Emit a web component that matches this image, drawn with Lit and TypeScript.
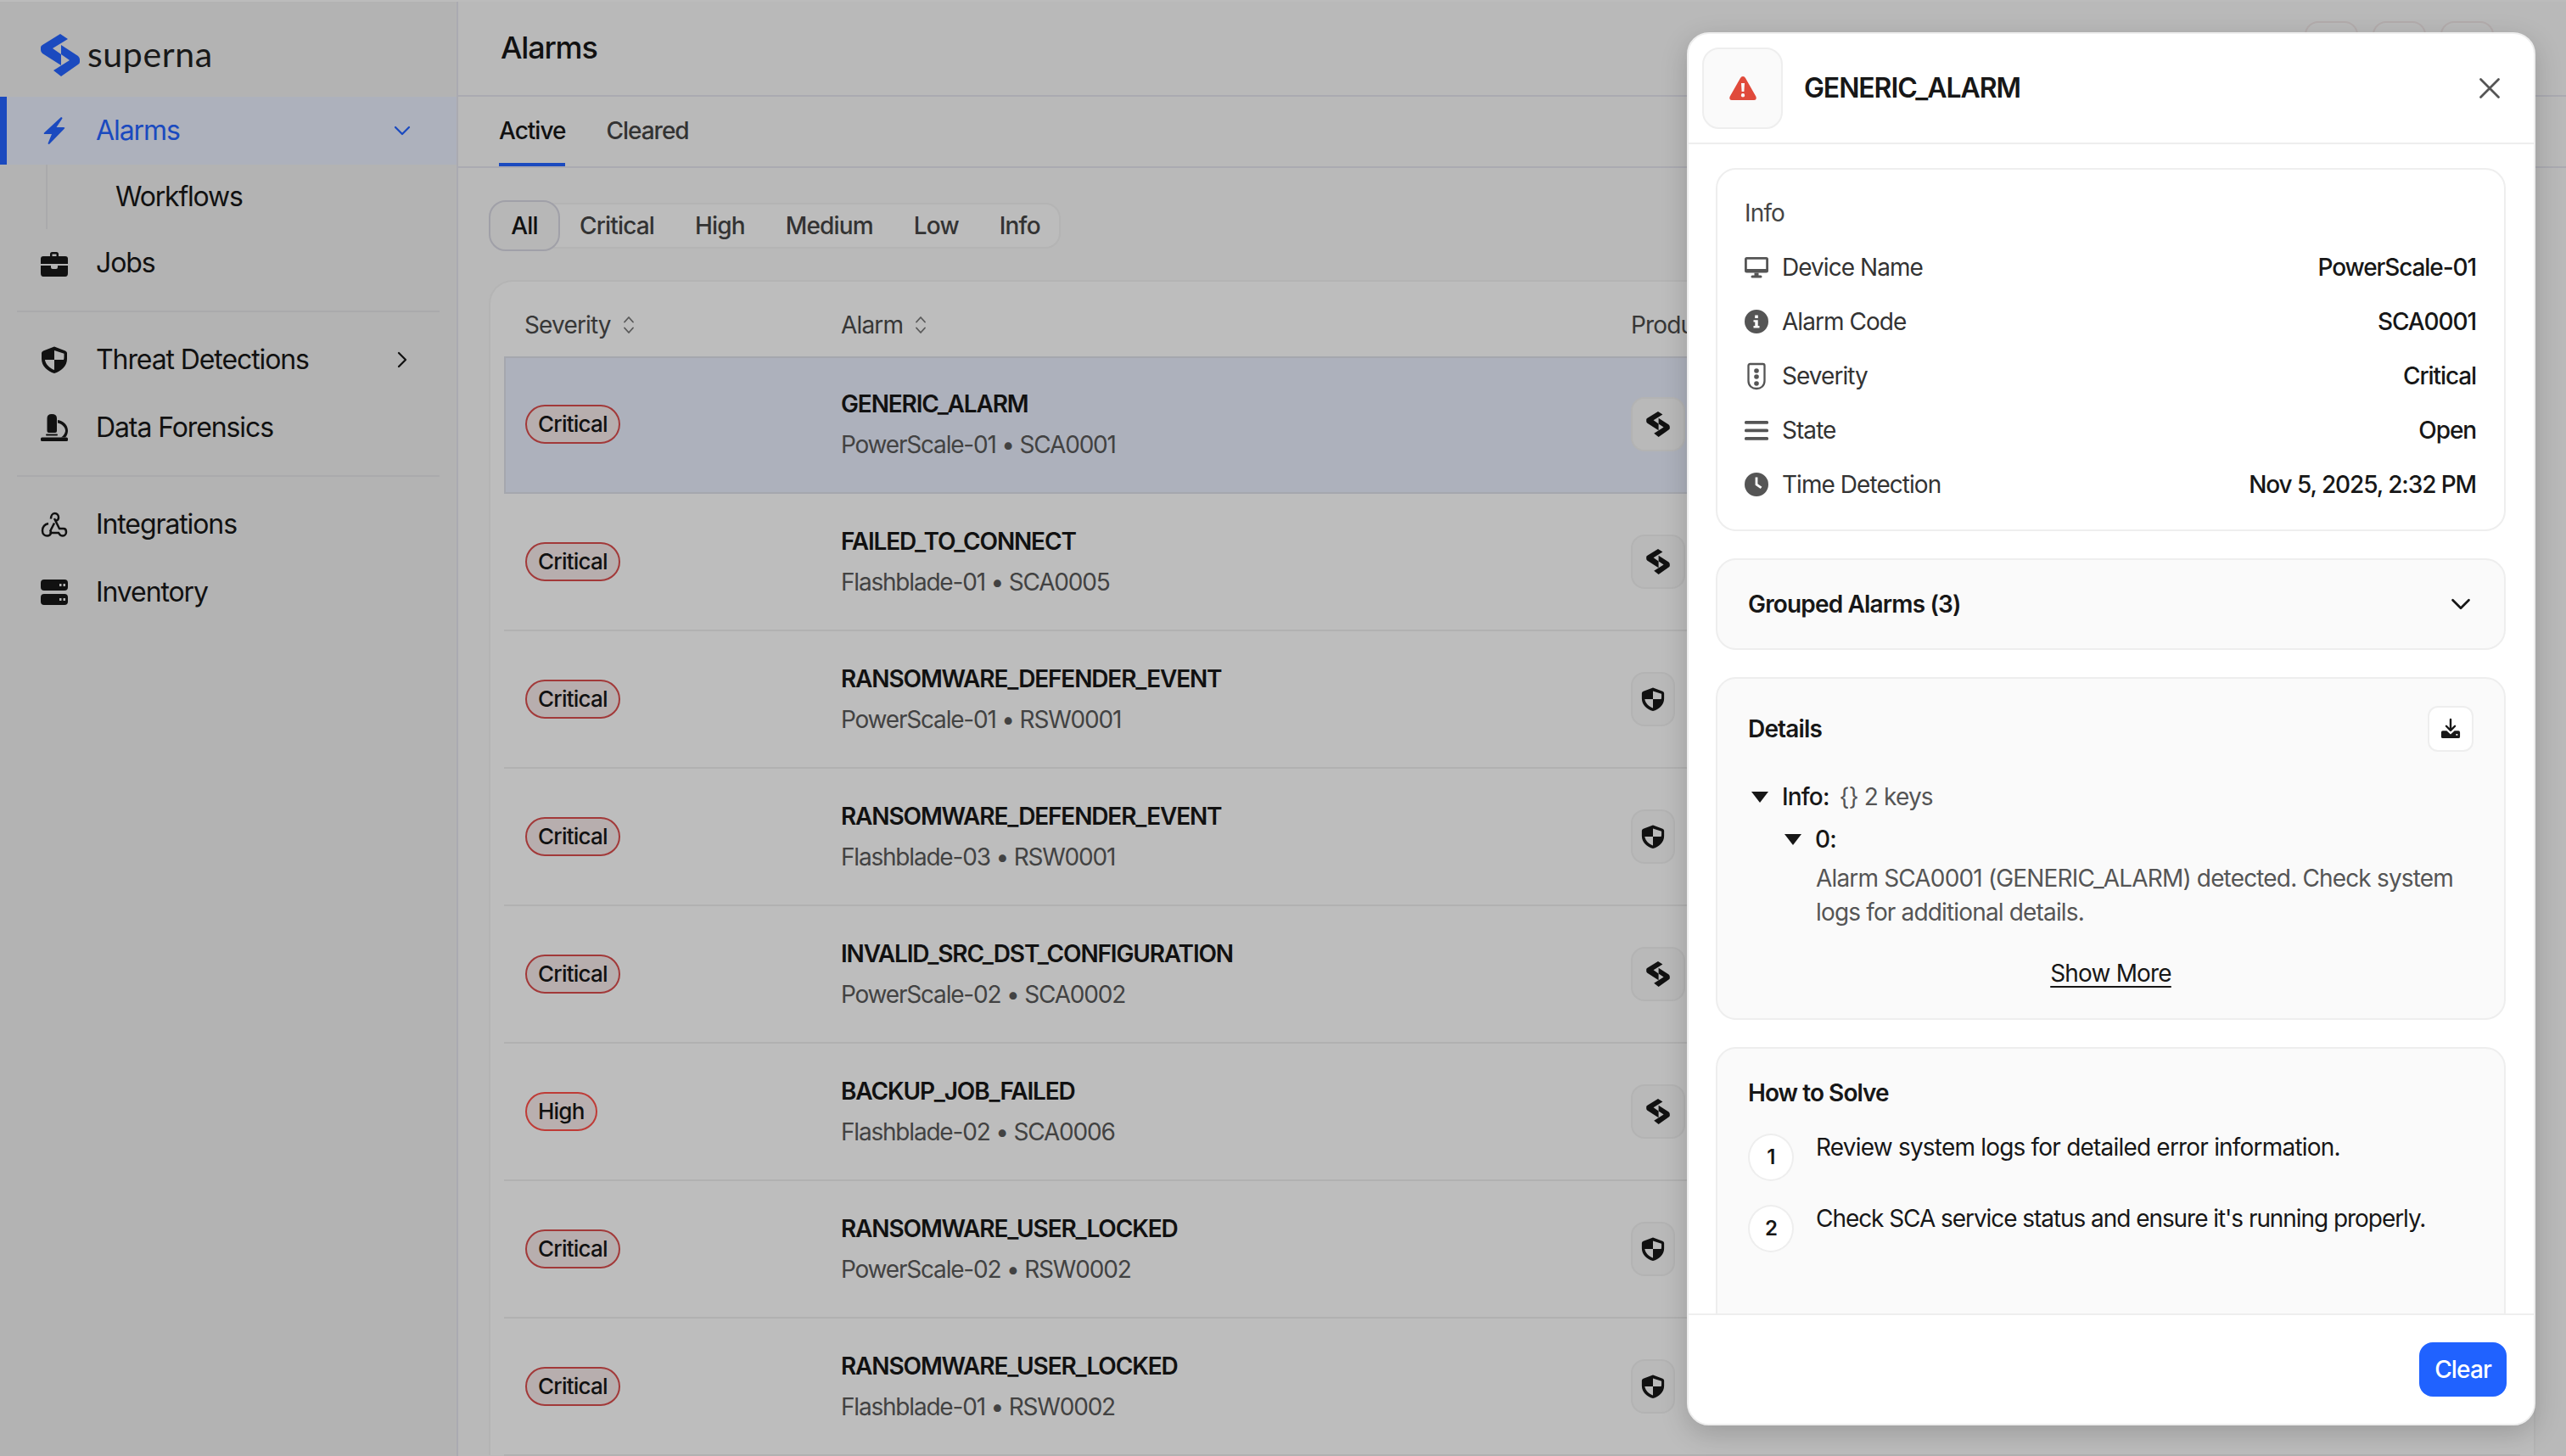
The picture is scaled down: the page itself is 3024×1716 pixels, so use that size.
import { LitElement, css, html, svg } from 'lit';
import { customElement } from 'lit/decorators.js';

const logoMark = svg`
  <path d="M23 0L32 6L14 17L24 24V37L2 23Q0 21 0 19V16Q0 14 2 13Z" />
  <path d="M24 13L44 26Q46 28 46 30V33Q46 35 44 36L24 50L15 43L34 31L24 24Z" />
`;

const shieldHalf = svg`
  <path fill-rule="evenodd" d="M16 0.500L29 5.500Q31 6.500 31 8V15C31 23.500 24 29.500 16 32C8 29.500 1 23.500 1 15V8Q1 6.500 3 5.500ZM16 5V16H27C27.300 15 27.500 14 27.500 13V8.800ZM16 16H4.900C5.900 21.500 10.500 26 16 28Z" />
`;

const icons = {
  bolt: svg`<path d="M24 0L4 18.500Q3 20 5 20H13L8.500 31Q9 32.500 10.500 31.500L28 13.500Q29 12 27 12H18.500L25.500 1.500Q25.500 0 24 0Z" />`,
  briefcase: svg`
    <path d="M11 8V5.500Q11 3 13.500 3H18.500Q21 3 21 5.500V8H18.500V5.500H13.500V8Z" />
    <path d="M3 8H29Q32 8 32 11V17H0V11Q0 8 3 8Z" />
    <path d="M0 19H12V21Q12 23 14 23H18Q20 23 20 21V19H32V28Q32 32 29 32H3Q0 32 0 28Z" />
  `,
  shield: shieldHalf,
  microscope: svg`
    <path d="M7.500 5Q7.500 0 13 0Q19 0 19 5V20Q19 22 17 22H9.500Q7.500 22 7.500 20Z" />
    <path d="M20 7C27 8 32 13 32 19.500C32 22.500 31 25.500 29 27.500H24C27 25.500 29 22.500 29 19.500C29 15.500 25 11.500 20 10.500Z" />
    <rect x="6" y="23.500" width="14" height="2" rx="1" />
    <rect x="0" y="27.500" width="32" height="4.500" rx="1.500" />
  `,
  webhook: svg`
    <g fill="none" stroke="currentColor" stroke-width="2.500">
      <path d="M12 9.500C12 6.500 13.500 3 16.500 3S21 5.500 21 8S19.500 11.500 17 12" />
      <path d="M16 9L22 21H27C29 21 30 23 30 25S28.500 29.500 26 29.500S22 28 21 26H10.500" />
      <path d="M9 15C5 16 2 19 2 23.500S5 29.500 7.500 29.500S12 28 12 25.500C12 24.500 11.800 24 11.400 23.500L16 14.500" />
    </g>
  `,
  server: svg`
    <path fill-rule="evenodd" d="M4 1H28Q32 1 32 5V10Q32 14 28 14H4Q0 14 0 10V5Q0 1 4 1ZM22 6V9H24.500V6ZM26.500 6V9H29V6Z" />
    <path fill-rule="evenodd" d="M4 18H28Q32 18 32 22V27Q32 31 28 31H4Q0 31 0 27V22Q0 18 4 18ZM22 23V26H24.500V23ZM26.500 23V26H29V23Z" />
  `,
};

const infoIcons = {
  monitor: svg`
    <path fill-rule="evenodd" d="M2.500 2H25.500Q28 2 28 4.500V18Q28 20.500 25.500 20.500H2.500Q0 20.500 0 18V4.500Q0 2 2.500 2ZM2.800 4.800V16H25.200V4.800Z" />
    <path d="M11.500 20.500H16.500V23.500H19Q20.500 23.500 20.500 25T19 26.500H9Q7.500 26.500 7.500 25T9 23.500H11.500Z" />
  `,
  info: svg`
    <path fill-rule="evenodd" d="M14 0A14 14 0 1 1 14 28A14 14 0 1 1 14 0ZM12.200 6.500V10H15.800V6.500ZM10.500 12.300V14.500H12.300V19H10.500V21.500H17.500V19H15.700V12.300Z" />
  `,
  severity: svg`
    <path fill="none" stroke="currentColor" stroke-width="2.300" d="M6.500 0H21.500Q23.500 0 23.500 2V20C23.500 26 19 29 14 29S4.500 26 4.500 20V2Q4.500 0 6.500 0Z" />
    <circle cx="14" cy="8" r="2.800" /><circle cx="14" cy="15" r="2.800" /><circle cx="14" cy="23" r="2.800" />
  `,
  state: svg`
    <rect x="0" y="3" width="28" height="3.800" rx="1.500" />
    <rect x="0" y="12.500" width="28" height="3.800" rx="1.500" />
    <rect x="0" y="22" width="28" height="3.800" rx="1.500" />
  `,
  clock: svg`
    <path fill-rule="evenodd" d="M14 0A14 14 0 1 1 14 28A14 14 0 1 1 14 0ZM12.600 5.500V14.700L18.800 19L20.400 16.800L15.400 13.300V5.500Z" />
  `,
};

const chevron = (rotate: number) => html`
  <svg class="chev" viewBox="0 0 24 24" style="transform: rotate(${rotate}deg)">
    <path d="M6 9l6 6 6-6" fill="none" stroke="currentColor" stroke-width="1.700" stroke-linecap="round" stroke-linejoin="round" />
  </svg>
`;

const sortIcon = html`
  <svg class="sort" viewBox="0 0 16 22">
    <path d="M3 7.500l5-5.500 5 5.500M3 14.500l5 5.500 5-5.500" fill="none" stroke="currentColor" stroke-width="1.800" stroke-linecap="round" stroke-linejoin="round" />
  </svg>
`;

const treeCaret = html`
  <svg class="caret" viewBox="0 0 20 14"><path d="M0 1H20L10 14Z" /></svg>
`;

type Alarm = { severity: string; name: string; device: string; code: string; product: 'superna' | 'shield' };

const alarms: Alarm[] = [
  { severity: 'Critical', name: 'GENERIC_ALARM', device: 'PowerScale-01', code: 'SCA0001', product: 'superna' },
  { severity: 'Critical', name: 'FAILED_TO_CONNECT', device: 'Flashblade-01', code: 'SCA0005', product: 'superna' },
  { severity: 'Critical', name: 'RANSOMWARE_DEFENDER_EVENT', device: 'PowerScale-01', code: 'RSW0001', product: 'shield' },
  { severity: 'Critical', name: 'RANSOMWARE_DEFENDER_EVENT', device: 'Flashblade-03', code: 'RSW0001', product: 'shield' },
  { severity: 'Critical', name: 'INVALID_SRC_DST_CONFIGURATION', device: 'PowerScale-02', code: 'SCA0002', product: 'superna' },
  { severity: 'High', name: 'BACKUP_JOB_FAILED', device: 'Flashblade-02', code: 'SCA0006', product: 'superna' },
  { severity: 'Critical', name: 'RANSOMWARE_USER_LOCKED', device: 'PowerScale-02', code: 'RSW0002', product: 'shield' },
  { severity: 'Critical', name: 'RANSOMWARE_USER_LOCKED', device: 'Flashblade-01', code: 'RSW0002', product: 'shield' },
];

const infoRows = [
  { icon: infoIcons.monitor, label: 'Device Name', value: 'PowerScale-01' },
  { icon: infoIcons.info, label: 'Alarm Code', value: 'SCA0001' },
  { icon: infoIcons.severity, label: 'Severity', value: 'Critical' },
  { icon: infoIcons.state, label: 'State', value: 'Open' },
  { icon: infoIcons.clock, label: 'Time Detection', value: 'Nov 5, 2025, 2:32 PM' },
];

@customElement('app-root')
export class AppRoot extends LitElement {
  static styles = css`
    :host {
      background: #fbfbfb;
      color: #171717;
      display: block;
      font: 400 28px/40px Inter, 'Liberation Sans', sans-serif;
      height: 1716px;
      letter-spacing: -0.84px;
      overflow: hidden;
      position: relative;
      width: 3024px;
    }

    .frame {
      box-sizing: border-box;
      display: flex;
      height: 1716px;
      padding-top: 2px;
    }

    svg {
      display: block;
      fill: currentColor;
      flex: none;
      overflow: visible;
    }

    /* sidebar */
    .sidebar {
      background: #efefef;
      border-right: 2px solid #e3e3ed;
      box-sizing: border-box;
      flex: none;
      width: 540px;
    }

    .logo {
      align-items: center;
      box-sizing: border-box;
      color: #2563ff;
      display: flex;
      gap: 9px;
      height: 112px;
      padding: 14px 0 0 48px;
    }

    .logo svg {
      height: 50px;
      width: 46px;
    }

    .logo span {
      color: #222;
      font: 400 41px/50px Lato, Inter, sans-serif;
      letter-spacing: 0.6px;
      margin-top: -3px;
    }

    .nav-item {
      align-items: center;
      box-sizing: border-box;
      display: flex;
      font-size: 32px;
      gap: 33px;
      height: 80px;
      letter-spacing: -1.1px;
      padding: 0 48px;
    }

    .nav-item > svg:first-child {
      height: 32px;
      width: 32px;
    }

    .nav-item span {
      flex: 1;
    }

    .nav-item.active {
      background: #e7ecfb;
      box-shadow: inset 8px 0 0 #2563ff;
      color: #2563ff;
    }

    .chev {
      color: inherit;
      height: 32px;
      width: 32px;
    }

    .sub-item {
      border-left: 2px solid #e3e3e6;
      font-size: 32px;
      height: 76px;
      letter-spacing: -1.2px;
      line-height: 76px;
      margin-left: 54px;
      padding-left: 80px;
    }

    .nav-divider {
      background: #e3e3e6;
      height: 2px;
      margin: 16px 20px;
      width: 498px;
    }

    /* main */
    .main {
      background: #f7f7f7;
      flex: 1;
      min-width: 0;
    }

    .page-head {
      align-items: center;
      border-bottom: 2px solid #e3e3ed;
      box-sizing: border-box;
      display: flex;
      font-size: 36px;
      font-weight: 500;
      gap: 17px;
      height: 112px;
      letter-spacing: -1.2px;
      padding: 0 85px 0 50px;
    }

    .page-head .title {
      flex: 1;
      margin-top: -2px;
    }

    .head-btn {
      align-self: flex-start;
      background: #f8f8f8;
      border: 2px solid #efe6e6;
      border-radius: 16px;
      box-sizing: border-box;
      height: 64px;
      margin-top: 23px;
      width: 63px;
    }

    .tabs {
      border-bottom: 2px solid #e3e3ed;
      box-sizing: border-box;
      display: flex;
      font-weight: 500;
      gap: 48px;
      height: 84px;
      letter-spacing: -1px;
      padding-left: 48px;
    }

    .tab {
      color: #444;
      line-height: 80px;
    }

    .tab.active {
      box-shadow: inset 0 -4px 0 #2563ff;
      color: #171717;
    }

    .content {
      padding: 41px 36px 0;
    }

    .filters {
      align-items: center;
      background: #fbfbfb;
      border: 2px solid #f0f0f0;
      border-radius: 18px;
      box-sizing: border-box;
      display: flex;
      font-weight: 500;
      gap: 48px;
      height: 54px;
      width: 674px;
    }

    .filters span {
      color: #444;
      flex: none;
    }

    .filters .all {
      align-items: center;
      background: #f4f4f4;
      border: 2px solid #d6d6e0;
      border-radius: 20px;
      box-sizing: border-box;
      color: #171717;
      display: flex;
      height: 60px;
      justify-content: center;
      margin: -3px -25px -3px -2px;
      width: 84px;
    }

    .table {
      background: #fcfcfc;
      border: 2px solid #f1f1f1;
      border-bottom: 0;
      border-radius: 28px 28px 0 0;
      box-sizing: border-box;
      height: 1385px;
      margin-top: 37px;
      padding: 0 16px;
    }

    .cols {
      display: grid;
      grid-template-columns: 397px 931px 1fr;
    }

    .table-head {
      align-items: center;
      box-sizing: border-box;
      color: #4a4a4a;
      height: 88px;
      padding-top: 14px;
    }

    .table-head > div {
      align-items: center;
      display: flex;
      gap: 13px;
    }

    .table-head > div:first-child {
      padding-left: 24px;
    }

    .sort {
      color: #777;
      height: 22px;
      width: 16px;
    }

    .row {
      align-items: center;
      border-bottom: 2px solid #ededed;
      box-sizing: border-box;
      height: 162px;
    }

    .row.selected {
      background: #e7ecfb;
      border-bottom-color: #dcdfe8;
      box-shadow: inset 0 2px 0 #dcdfe8, inset 2px 0 0 #dcdfe8;
    }

    .badge-cell {
      padding-left: 25px;
    }

    .badge {
      background: #f5e8e8;
      border: 2px solid #d94d4d;
      border-radius: 23px;
      box-sizing: border-box;
      display: inline-block;
      font-size: 26px;
      font-weight: 500;
      height: 46px;
      letter-spacing: -0.78px;
      line-height: 42px;
      padding: 0 13px;
      vertical-align: top;
    }

    .badge.high {
      background: #f7eaea;
      border-color: #ff4f49;
    }

    .alarm-name {
      font-weight: 600;
      letter-spacing: -1.15px;
      line-height: 48px;
    }

    .alarm-sub {
      color: #595959;
      letter-spacing: -1.2px;
      line-height: 48px;
    }

    .product {
      align-items: center;
      background: #f7f7f7;
      border: 2px solid #efefef;
      border-radius: 16px;
      box-sizing: border-box;
      display: flex;
      height: 64px;
      justify-content: center;
      width: 64px;
    }

    .product.shield {
      width: 52px;
    }

    .product svg {
      height: 30px;
      width: 28px;
    }

    /* panel */
    .scrim {
      background: rgba(0, 0, 0, 0.25);
      inset: 0;
      position: absolute;
    }

    .panel {
      background: #fff;
      border: 2px solid #eee;
      border-radius: 26px;
      bottom: 36px;
      box-shadow: 0 10px 32px rgba(0, 0, 0, 0.18);
      box-sizing: border-box;
      display: flex;
      flex-direction: column;
      overflow: hidden;
      position: absolute;
      right: 36px;
      top: 38px;
      width: 1000px;
    }

    .panel-head {
      align-items: center;
      border-bottom: 2px solid #eee;
      box-sizing: border-box;
      display: flex;
      flex: none;
      gap: 25px;
      height: 130px;
      padding: 0 40px 0 16px;
    }

    .alert-box {
      align-items: center;
      background: #fafafa;
      border: 2px solid #eee;
      border-radius: 20px;
      box-sizing: border-box;
      display: flex;
      height: 96px;
      justify-content: center;
      width: 95px;
    }

    .alert-box svg {
      height: 28px;
      width: 32px;
    }

    .panel-title {
      flex: 1;
      font-size: 32px;
      font-weight: 600;
      letter-spacing: -1.1px;
    }

    .close {
      color: #555;
      height: 24px;
      width: 24px;
    }

    .panel-body {
      display: flex;
      flex: 1;
      flex-direction: column;
      gap: 32px;
      min-height: 0;
      overflow: hidden;
      padding: 28px 33px 0 32px;
    }

    .card {
      border: 2px solid #eee;
      border-radius: 24px;
      box-sizing: border-box;
      flex: none;
    }

    .card.tinted {
      background: #fafafa;
    }

    .info-card {
      height: 428px;
      padding: 31px 33px 0 32px;
    }

    .info-label {
      color: #444;
      margin-bottom: 12px;
    }

    .info-row {
      align-items: center;
      display: flex;
      height: 64px;
    }

    .info-row svg {
      color: #555;
      height: 28px;
      margin-right: 16px;
      width: 28px;
    }

    .info-row .label {
      color: #333;
      flex: 1;
      letter-spacing: -0.95px;
    }

    .info-row .value {
      font-weight: 500;
      letter-spacing: -1.1px;
    }

    .grouped {
      align-items: center;
      display: flex;
      font-weight: 600;
      height: 108px;
      justify-content: space-between;
      padding: 0 32px 0 36px;
    }

    .grouped .chev {
      height: 38px;
      width: 38px;
    }

    .details {
      height: 404px;
      padding: 32px 36px 0;
    }

    .details-head {
      align-items: center;
      display: flex;
      font-weight: 600;
      height: 54px;
      justify-content: space-between;
      margin-bottom: 33px;
    }

    .icon-btn {
      align-items: center;
      background: #fff;
      border: 2px solid #eee;
      border-radius: 12px;
      box-sizing: border-box;
      display: flex;
      height: 54px;
      justify-content: center;
      width: 54px;
    }

    .icon-btn svg {
      height: 24px;
      width: 24px;
    }

    .tree-line {
      align-items: center;
      display: flex;
      font-weight: 500;
      gap: 16px;
      height: 40px;
      margin-bottom: 10px;
      padding-left: 4px;
    }

    .tree-line.nested {
      padding-left: 43px;
    }

    .caret {
      height: 14px;
      width: 20px;
    }

    .muted {
      color: #555;
      font-weight: 400;
      margin-left: -4px;
    }

    .tree-text {
      color: #555;
      margin-bottom: 32px;
      margin-left: 80px;
      margin-top: -4px;
    }

    .show-more {
      text-align: center;
      text-decoration: underline;
      text-underline-offset: 5px;
    }

    .solve {
      height: 400px;
      padding: 32px 36px 0;
    }

    .solve-title {
      font-weight: 600;
      letter-spacing: -0.95px;
      margin-bottom: 28px;
    }

    .step {
      display: flex;
      gap: 26px;
      letter-spacing: -0.8px;
      line-height: 32px;
      margin-bottom: 28px;
    }

    .step.tight {
      letter-spacing: -1.06px;
    }

    .step-num {
      align-items: center;
      background: #fff;
      border: 2px solid #eee;
      border-radius: 50%;
      box-sizing: border-box;
      display: flex;
      flex: none;
      font-size: 24px;
      font-weight: 600;
      height: 56px;
      justify-content: center;
      width: 54px;
    }

    .panel-foot {
      background: #fff;
      border-top: 2px solid #eee;
      box-sizing: border-box;
      display: flex;
      flex: none;
      height: 130px;
      justify-content: flex-end;
      padding: 32px 32px 0 0;
      position: relative;
    }

    .clear {
      align-items: center;
      background: #2062ff;
      border-radius: 16px;
      color: #fff;
      display: flex;
      font-weight: 500;
      height: 64px;
      padding: 0 18px;
    }
  `;

  renderNav(icon: unknown, label: string, trailing: unknown = null, active = false) {
    return html`
      <div class="nav-item ${active ? 'active' : ''}">
        <svg viewBox="0 0 32 32">${icon}</svg>
        <span>${label}</span>
        ${trailing}
      </div>
    `;
  }

  renderRow(alarm: Alarm, index: number) {
    return html`
      <div class="cols row ${index === 0 ? 'selected' : ''}">
        <div class="badge-cell">
          <span class="badge ${alarm.severity === 'High' ? 'high' : ''}">${alarm.severity}</span>
        </div>
        <div>
          <div class="alarm-name">${alarm.name}</div>
          <div class="alarm-sub">${alarm.device} • ${alarm.code}</div>
        </div>
        <div>
          <div class="product ${alarm.product}">
            ${alarm.product === 'superna'
              ? html`<svg viewBox="0 0 46 50">${logoMark}</svg>`
              : html`<svg viewBox="0 0 32 32">${shieldHalf}</svg>`}
          </div>
        </div>
      </div>
    `;
  }

  render() {
    return html`
      <div class="frame">
        <aside class="sidebar">
          <div class="logo">
            <svg viewBox="0 0 46 50">${logoMark}</svg>
            <span>superna</span>
          </div>
          ${this.renderNav(icons.bolt, 'Alarms', chevron(0), true)}
          <div class="sub-item">Workflows</div>
          ${this.renderNav(icons.briefcase, 'Jobs')}
          <div class="nav-divider"></div>
          ${this.renderNav(icons.shield, 'Threat Detections', chevron(-90))}
          ${this.renderNav(icons.microscope, 'Data Forensics')}
          <div class="nav-divider"></div>
          ${this.renderNav(icons.webhook, 'Integrations')}
          ${this.renderNav(icons.server, 'Inventory')}
        </aside>

        <main class="main">
          <div class="page-head">
            <div class="title">Alarms</div>
            <div class="head-btn"></div>
            <div class="head-btn"></div>
            <div class="head-btn"></div>
          </div>
          <div class="tabs">
            <div class="tab active">Active</div>
            <div class="tab">Cleared</div>
          </div>
          <div class="content">
            <div class="filters">
              <span class="all">All</span>
              <span>Critical</span>
              <span>High</span>
              <span>Medium</span>
              <span>Low</span>
              <span>Info</span>
            </div>
            <div class="table">
              <div class="cols table-head">
                <div>Severity ${sortIcon}</div>
                <div>Alarm ${sortIcon}</div>
                <div>Product</div>
              </div>
              ${alarms.map((alarm, index) => this.renderRow(alarm, index))}
            </div>
          </div>
        </main>
      </div>

      <div class="scrim"></div>

      <section class="panel">
        <header class="panel-head">
          <div class="alert-box">
            <svg viewBox="0 0 32 28">
              <path fill="#e04a3b" fill-rule="evenodd" d="M16 0Q18 0 19 2L31.500 24Q32.500 28 29 28H3Q-0.500 28 0.500 24L13 2Q14 0 16 0ZM14 8L14.600 18H17.400L18 8ZM16 20A2.200 2.200 0 1 0 16 24.400A2.200 2.200 0 1 0 16 20Z" />
            </svg>
          </div>
          <div class="panel-title">GENERIC_ALARM</div>
          <svg class="close" viewBox="0 0 24 24">
            <path d="M1.500 1.500L22.500 22.500M22.500 1.500L1.500 22.500" fill="none" stroke="currentColor" stroke-width="2.800" stroke-linecap="round" />
          </svg>
        </header>

        <div class="panel-body">
          <div class="card info-card">
            <div class="info-label">Info</div>
            ${infoRows.map(
              (row) => html`
                <div class="info-row">
                  <svg viewBox="0 0 28 28">${row.icon}</svg>
                  <span class="label">${row.label}</span>
                  <span class="value">${row.value}</span>
                </div>
              `,
            )}
          </div>

          <div class="card tinted grouped">
            <span>Grouped Alarms (3)</span>
            ${chevron(0)}
          </div>

          <div class="card tinted details">
            <div class="details-head">
              <span>Details</span>
              <div class="icon-btn">
                <svg viewBox="0 0 26 26">
                  <path d="M13 1V15M7.500 9.500L13 15L18.500 9.500" fill="none" stroke="currentColor" stroke-width="2.600" stroke-linecap="round" stroke-linejoin="round" />
                  <path fill-rule="evenodd" d="M3 15.500H8L13 20L18 15.500H23Q25 15.500 25 17.500V23Q25 25 23 25H3Q1 25 1 23V17.500Q1 15.500 3 15.500ZM20 19.500V21.500H22V19.500Z" />
                </svg>
              </div>
            </div>
            <div class="tree-line">${treeCaret}<span>Info:</span><span class="muted">{} 2 keys</span></div>
            <div class="tree-line nested">${treeCaret}<span>0:</span></div>
            <div class="tree-text">Alarm SCA0001 (GENERIC_ALARM) detected. Check system logs for additional details.</div>
            <div class="show-more">Show More</div>
          </div>

          <div class="card tinted solve">
            <div class="solve-title">How to Solve</div>
            <div class="step">
              <div class="step-num">1</div>
              <div>Review system logs for detailed error information.</div>
            </div>
            <div class="step tight">
              <div class="step-num">2</div>
              <div>Check SCA service status and ensure it's running properly.</div>
            </div>
          </div>
        </div>

        <footer class="panel-foot">
          <div class="clear">Clear</div>
        </footer>
      </section>
    `;
  }
}

declare global {
  interface HTMLElementTagNameMap {
    'app-root': AppRoot;
  }
}
